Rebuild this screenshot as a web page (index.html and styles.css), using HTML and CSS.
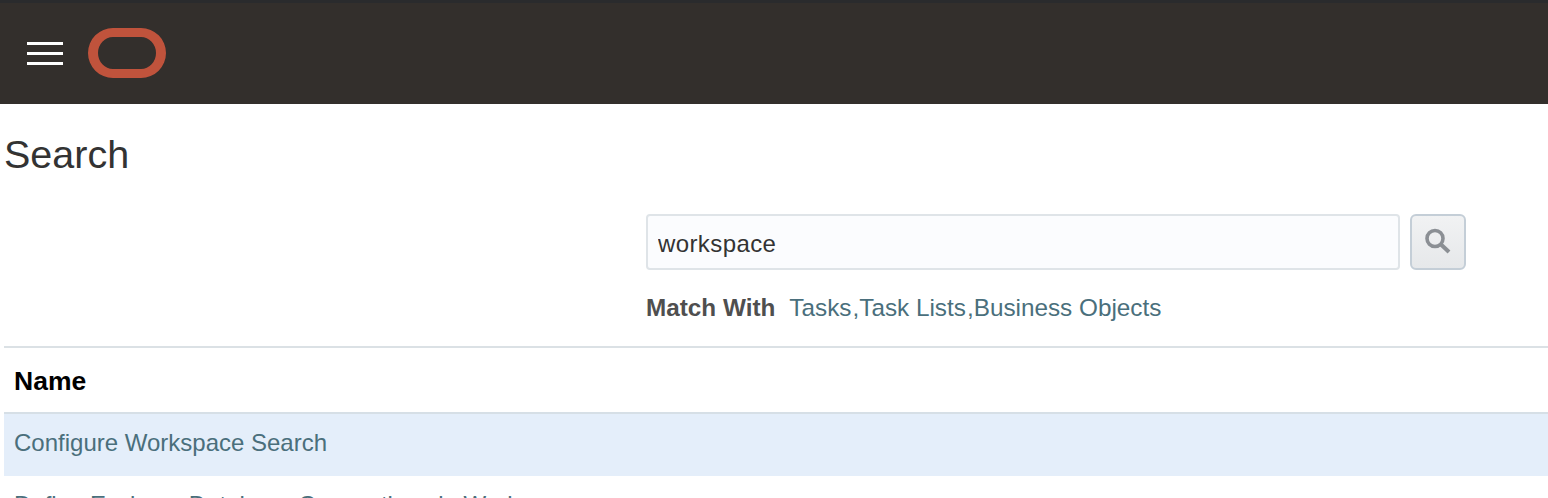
FILE: index.html
```html
<!DOCTYPE html>
<html lang="en">

<head>
    <meta charset="UTF-8">
    <meta name="viewport" content="width=device-width, initial-scale=1.0">
    <title>Search</title>
    <link rel="stylesheet" href="styles.css">
</head>

<body>
    <header class="topbar">
        <button class="menu-btn" aria-label="Menu">
            <span></span>
            <span></span>
            <span></span>
        </button>
        <div class="logo"></div>
    </header>

    <main class="content">
        <h1>Search</h1>

        <div class="search-panel">
            <div class="search-row">
                <input class="search-input" type="text" value="workspace">
                <button class="search-btn" aria-label="Search">
                    <svg width="30" height="30" viewBox="0 0 30 30">
                        <circle cx="12" cy="11.5" r="8" fill="none" stroke="#8b8f94" stroke-width="3.6" />
                        <path d="M18 17.5l8 7.5" fill="none" stroke="#8b8f94" stroke-width="4" />
                    </svg>
                </button>
            </div>
            <div class="match-row">
                <span class="match-label">Match With</span>
                <span class="match-values"><a href="#">Tasks</a>,<a href="#">Task Lists</a>,<a href="#">Business Objects</a></span>
            </div>
        </div>

        <table class="results">
            <thead>
                <tr>
                    <th>Name</th>
                </tr>
            </thead>
            <tbody>
                <tr class="selected">
                    <td><a href="#">Configure Workspace Search</a></td>
                </tr>
                <tr>
                    <td><a href="#">Define Essbase Database Connections in Workspace</a></td>
                </tr>
            </tbody>
        </table>
    </main>
</body>

</html>
```

FILE: styles.css
```css
html,
body {
    height: 100%;
    overflow: hidden;
}

body {
    margin: 0;
    font-family: "Liberation Sans", Arial, sans-serif;
    background-color: #fff;
    color: #333;
}

a {
    color: #4a6f7c;
    text-decoration: none;
}

.topbar {
    display: flex;
    align-items: center;
    gap: 25px;
    box-sizing: border-box;
    height: 104px;
    padding-left: 27px;
    background-color: #332f2c;
    border-top: 3px solid #2a2b2d;
}

.menu-btn {
    display: flex;
    flex-direction: column;
    gap: 7px;
    width: 36px;
    padding: 0;
    background: none;
    border: none;
}

.menu-btn span {
    display: block;
    height: 3px;
    background-color: #fff;
}

.logo {
    box-sizing: border-box;
    width: 78px;
    height: 50px;
    margin-bottom: 1px;
    border-style: solid;
    border-color: #c0533c;
    border-width: 9px 10px;
    border-radius: 25px;
}

.content {
    padding-left: 4px;
}

h1 {
    margin: 0;
    padding-top: 26px;
    font-size: 39.5px;
    font-weight: normal;
    line-height: 48px;
}

.search-panel {
    margin-top: 36px;
    margin-left: 642px;
}

.search-row {
    display: flex;
    gap: 10px;
}

.search-input {
    box-sizing: border-box;
    width: 754px;
    height: 56px;
    padding: 4px 10px 0;
    font-family: inherit;
    font-size: 24px;
    letter-spacing: 0.4px;
    color: #333;
    background-color: #fbfcfe;
    border: 2px solid #dfe4e8;
    border-radius: 4px;
    outline: none;
}

.search-btn {
    display: flex;
    align-items: center;
    justify-content: center;
    box-sizing: border-box;
    width: 56px;
    height: 56px;
    padding: 0;
    background: linear-gradient(#f1f2f3, #e6e8ea);
    border: 2px solid #c4ced7;
    border-radius: 6px;
}

.match-row {
    display: flex;
    gap: 14px;
    margin-top: 24px;
    font-size: 24.3px;
    line-height: 28px;
}

.match-label {
    font-weight: bold;
    color: #4f4f4f;
}

.match-values {
    color: #4a6f7c;
}

.match-values a {
    margin-right: 1px;
}

.results {
    width: 100%;
    margin-top: 24px;
    border-collapse: collapse;
    font-size: 24px;
}

.results th {
    height: 62px;
    padding: 2px 10px 0;
    font-size: 26.5px;
    text-align: left;
    color: #000;
    border-top: 2px solid #dbe1e5;
    border-bottom: 2px solid #d6dfe6;
}

.results td {
    height: 58px;
    padding: 0 10px 4px;
    white-space: nowrap;
}

.selected td {
    background-color: #e4eefa;
}
```
